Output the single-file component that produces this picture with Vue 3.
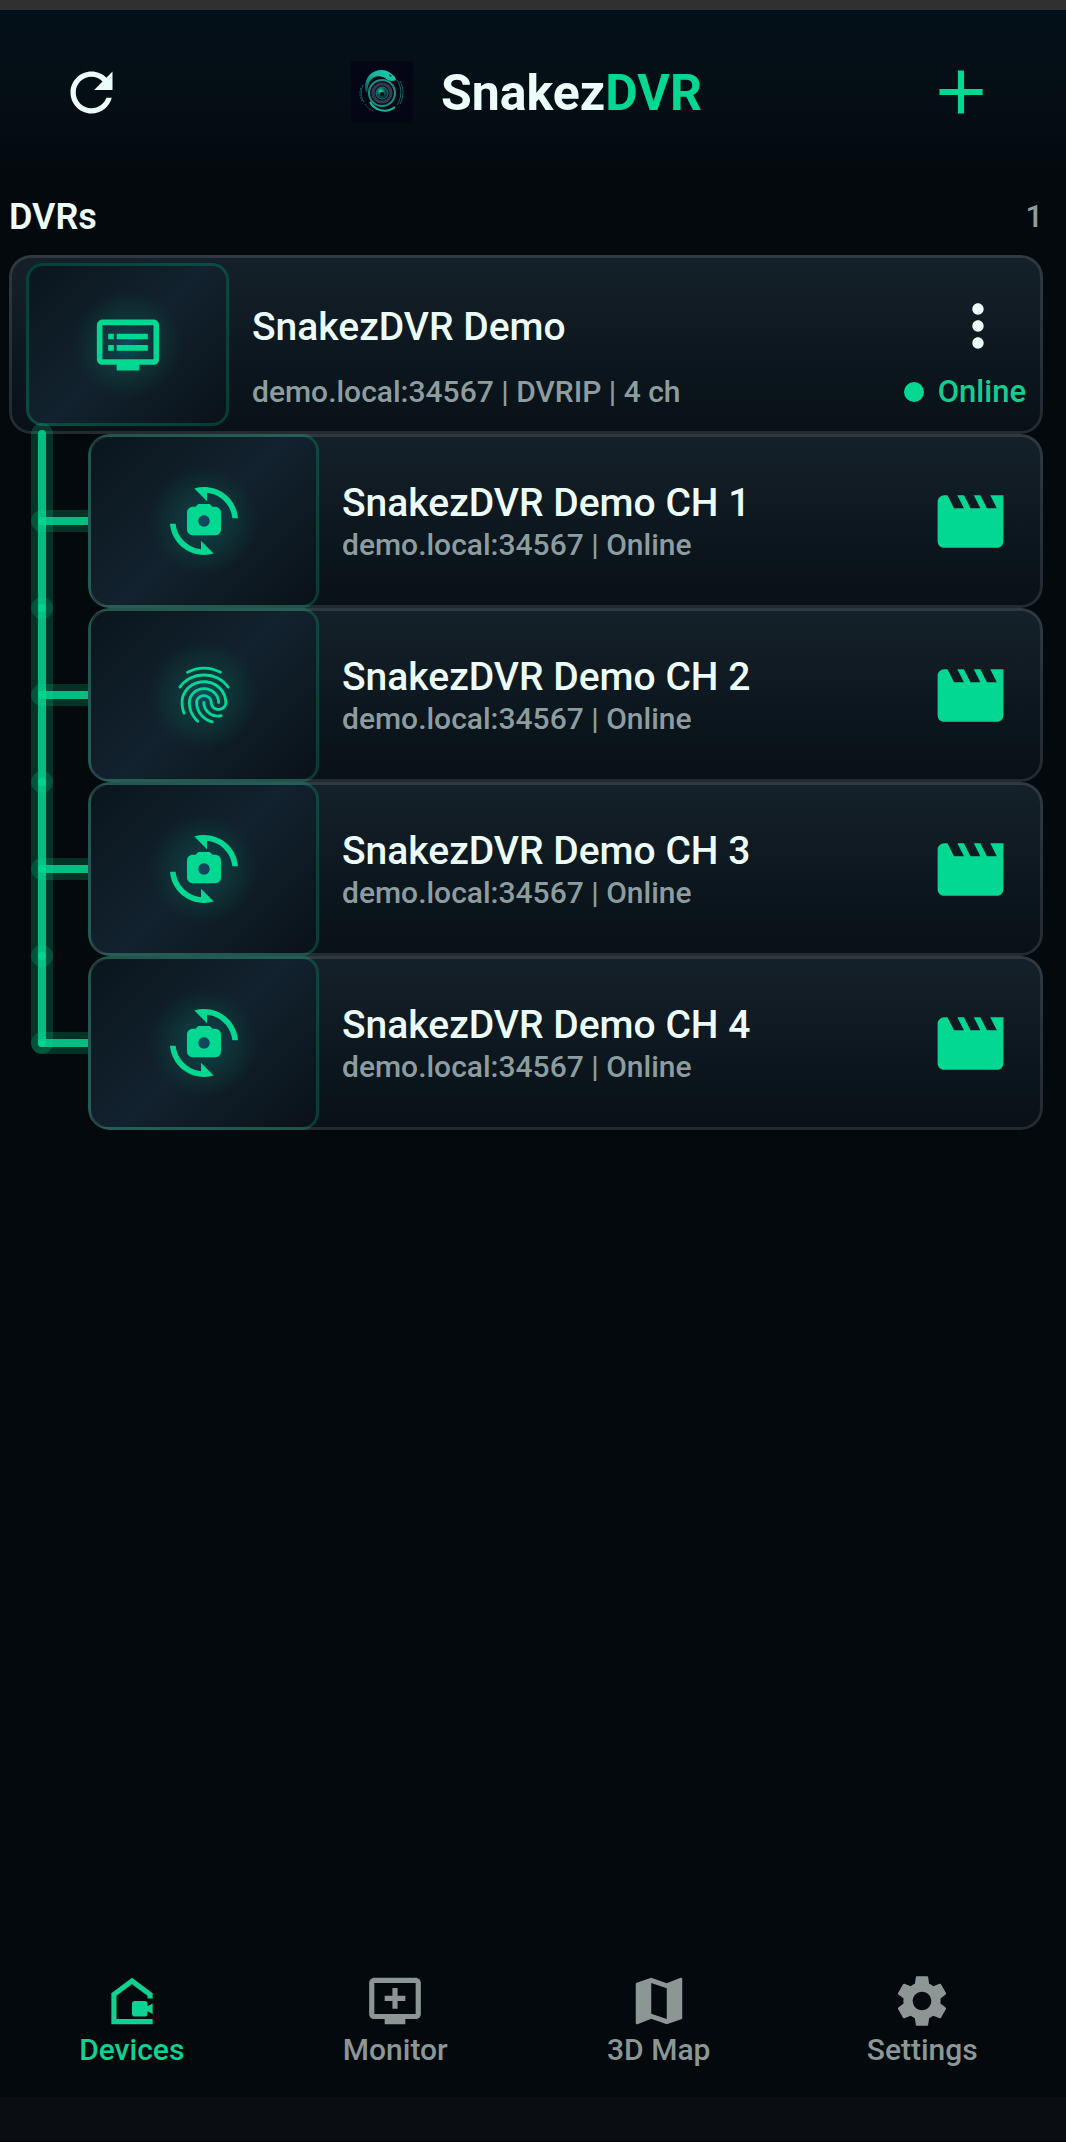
<script setup>
const dvrs = [{ name: 'SnakezDVR Demo', host: 'demo.local:34567', protocol: 'DVRIP' }]

const icons = {
  refresh:
    'M17.65 6.35C16.2 4.9 14.21 4 12 4c-4.42 0-7.99 3.58-7.99 8s3.57 8 7.99 8c3.73 0 6.84-2.55 7.73-6h-2.08c-.82 2.33-3.04 4-5.65 4-3.31 0-6-2.69-6-6s2.69-6 6-6c1.66 0 3.14.69 4.22 1.78L13 11h7V4l-2.35 2.35z',
  add: 'M19 13h-6v6h-2v-6H5v-2h6V5h2v6h6z',
  more:
    'M12 8c1.1 0 2-.9 2-2s-.9-2-2-2-2 .9-2 2 .9 2 2 2zm0 2c-1.1 0-2 .9-2 2s.9 2 2 2 2-.9 2-2-.9-2-2-2zm0 6c-1.1 0-2 .9-2 2s.9 2 2 2 2-.9 2-2-.9-2-2-2z',
  dvr:
    'M21 3H3c-1.1 0-2 .9-2 2v12c0 1.1.9 2 2 2h5v2h8v-2h5c1.1 0 1.99-.9 1.99-2L23 5c0-1.1-.9-2-2-2zm0 14H3V5h18v12zm-2-9H8v2h11V8zm0 4H8v2h11v-2zM7 8H5v2h2V8zm0 4H5v2h2v-2z',
  camera:
    'M16 7h-1l-1-1h-4L9 7H8c-1.1 0-2 .9-2 2v6c0 1.1.9 2 2 2h8c1.1 0 2-.9 2-2V9c0-1.1-.9-2-2-2zm-4 7c-1.1 0-2-.9-2-2s.9-2 2-2 2 .9 2 2-.9 2-2 2zM8.57.51l4.48 4.48V2.04c4.72.47 8.48 4.23 8.95 8.95h2C23.34 3.02 15.49-1.59 8.57.51zM10.95 21.96C6.23 21.49 2.47 17.73 2 13.01H0c.66 7.97 8.51 12.58 15.43 10.48l-4.48-4.48v2.95z',
  fingerprint:
    'M17.81 4.47c-.08 0-.16-.02-.23-.06C15.66 3.42 14 3 12.01 3c-1.98 0-3.86.47-5.57 1.41-.24.13-.54.04-.68-.2-.13-.24-.04-.55.2-.68C7.82 2.52 9.86 2 12.01 2c2.13 0 3.99.47 6.03 1.52.25.13.34.43.21.67-.09.18-.26.28-.44.28zM3.5 9.72c-.1 0-.2-.03-.29-.09-.23-.16-.28-.47-.12-.7.99-1.4 2.25-2.5 3.75-3.27C9.98 4.04 14 4.03 17.15 5.65c1.5.77 2.76 1.86 3.75 3.25.16.22.11.54-.12.7-.23.16-.54.11-.7-.12-.9-1.26-2.04-2.25-3.39-2.94-2.87-1.47-6.54-1.47-9.4.01-1.36.7-2.5 1.7-3.4 2.96-.08.14-.23.21-.39.21zm6.25 12.07c-.13 0-.26-.05-.35-.15-.87-.87-1.34-1.43-2.01-2.64-.69-1.23-1.05-2.73-1.05-4.34 0-2.97 2.54-5.39 5.66-5.39s5.66 2.42 5.66 5.39c0 .28-.22.5-.5.5s-.5-.22-.5-.5c0-2.42-2.09-4.39-4.66-4.39-2.57 0-4.66 1.97-4.66 4.39 0 1.44.32 2.77.93 3.85.64 1.15 1.08 1.64 1.85 2.42.19.2.19.51 0 .71-.11.1-.24.15-.37.15zm7.17-1.85c-1.19 0-2.24-.3-3.1-.89-1.49-1.01-2.38-2.65-2.38-4.39 0-.28.22-.5.5-.5s.5.22.5.5c0 1.41.72 2.74 1.94 3.56.71.48 1.54.71 2.54.71.24 0 .64-.03 1.04-.1.27-.05.53.13.58.41.05.27-.13.53-.41.58-.57.11-1.07.12-1.21.12zM14.91 22c-.04 0-.09-.01-.13-.02-1.59-.44-2.63-1.03-3.72-2.1-1.4-1.39-2.17-3.24-2.17-5.22 0-1.62 1.38-2.94 3.08-2.94 1.7 0 3.08 1.32 3.08 2.94 0 1.07.93 1.94 2.08 1.94s2.08-.87 2.08-1.94c0-3.77-3.25-6.83-7.25-6.83-2.84 0-5.44 1.58-6.61 4.03-.39.81-.59 1.76-.59 2.8 0 .78.07 2.01.67 3.61.1.26-.03.55-.29.64-.26.1-.55-.04-.64-.29-.49-1.31-.73-2.61-.73-3.96 0-1.2.23-2.29.68-3.24 1.33-2.79 4.28-4.6 7.51-4.6 4.55 0 8.25 3.51 8.25 7.83 0 1.62-1.38 2.94-3.08 2.94s-3.08-1.32-3.08-2.94c0-1.07-.93-1.94-2.08-1.94s-2.08.87-2.08 1.94c0 1.71.66 3.31 1.87 4.51.95.94 1.86 1.46 3.27 1.85.27.07.42.35.35.61-.05.23-.26.38-.47.38z',
  movie:
    'M18 4l2 4h-3l-2-4h-2l2 4h-3l-2-4H8l2 4H7L5 4H4c-1.1 0-1.99.9-1.99 2L2 18c0 1.1.9 2 2 2h16c1.1 0 2-.9 2-2V4h-4z',
  home:
    'M18 11v-1l-6-4.5L6 10v9h14v2H4V9l8-6 8 6v2zM18 13c0-.55-.45-1-1-1h-4c-.55 0-1 .45-1 1v4c0 .55.45 1 1 1h4c.55 0 1-.45 1-1v-1l2 1v-4l-2 1z',
  monitor:
    'M20 3H4c-1.1 0-2 .9-2 2v12c0 1.1.9 2 2 2h4v2h8v-2h4c1.1 0 2-.9 2-2V5c0-1.1-.9-2-2-2zm0 14H4V5h16v12zM16 10v2h-3v3h-2v-3H8v-2h3V7h2v3h3z',
  map:
    'M20.5 3l-.16.03L15 5.1 9 3 3.36 4.9c-.21.07-.36.25-.36.48V20.5c0 .28.22.5.5.5l.16-.03L9 18.9l6 2.1 5.64-1.9c.21-.07.36-.25.36-.48V3.5c0-.28-.22-.5-.5-.5zM15 19l-6-2.11V5l6 2.11V19z',
  settings:
    'M19.14 12.94c.04-.3.06-.61.06-.94 0-.32-.02-.64-.07-.94l2.03-1.58c.18-.14.23-.41.12-.61l-1.92-3.32c-.12-.22-.37-.29-.59-.22l-2.39.96c-.5-.38-1.03-.7-1.62-.94l-.36-2.54c-.04-.24-.24-.41-.48-.41h-3.84c-.24 0-.43.17-.47.41l-.36 2.54c-.59.24-1.13.57-1.62.94l-2.39-.96c-.22-.08-.47 0-.59.22L2.74 8.87c-.12.21-.08.47.12.61l2.03 1.58c-.05.3-.09.63-.09.94s.02.64.07.94l-2.03 1.58c-.18.14-.23.41-.12.61l1.92 3.32c.12.22.37.29.59.22l2.39-.96c.5.38 1.03.7 1.62.94l.36 2.54c.05.24.24.41.48.41h3.84c.24 0 .44-.17.47-.41l.36-2.54c.59-.24 1.13-.56 1.62-.94l2.39.96c.22.08.47 0 .59-.22l1.92-3.32c.12-.22.07-.47-.12-.61l-2.01-1.58zM12 15.6c-1.98 0-3.6-1.62-3.6-3.6s1.62-3.6 3.6-3.6 3.6 1.62 3.6 3.6-1.62 3.6-3.6 3.6z',
}

const channels = [
  { number: 1, icon: icons.camera },
  { number: 2, icon: icons.fingerprint },
  { number: 3, icon: icons.camera },
  { number: 4, icon: icons.camera },
]

const tabs = [
  { label: 'Devices', icon: icons.home, active: true },
  { label: 'Monitor', icon: icons.monitor },
  { label: '3D Map', icon: icons.map },
  { label: 'Settings', icon: icons.settings },
]
</script>

<template>
  <div class="app">
    <div class="status-strip"></div>

    <header class="header">
      <button class="icon-button" type="button" aria-label="Refresh">
        <svg class="icon-refresh" viewBox="0 0 24 24"><path :d="icons.refresh" /></svg>
      </button>
      <div class="brand">
        <svg class="logo" viewBox="0 0 62 62" aria-hidden="true">
          <defs>
            <linearGradient id="snake" x1="0" y1="1" x2="1" y2="0">
              <stop offset="0" stop-color="#0a4a4a" />
              <stop offset="0.5" stop-color="#12b49a" />
              <stop offset="1" stop-color="#1fd0ae" />
            </linearGradient>
            <radialGradient id="lens" cx="0.4" cy="0.35" r="0.7">
              <stop offset="0" stop-color="#2fd3ac" />
              <stop offset="0.45" stop-color="#0b5c56" />
              <stop offset="1" stop-color="#04181f" />
            </radialGradient>
          </defs>
          <rect width="62" height="62" fill="#040515" />
          <g fill="none" stroke="#0d6560" stroke-width="1">
            <path d="M12 24c-3 6-2 13 1 17M46 19c5 7 5 18 0 25M49 20c4 7 4 16 0 23" />
            <path d="M10 27c-2 5-1 9 1 13M14 43c2 3 5 6 9 7" stroke-dasharray="2 1" />
          </g>
          <circle cx="31" cy="32" r="13" fill="#0a0d1c" stroke="#17917f" stroke-width="2" />
          <circle cx="31" cy="32" r="9" fill="none" stroke="#343a50" stroke-width="3" />
          <circle cx="31" cy="32" r="6" fill="url(#lens)" stroke="#157d70" />
          <circle cx="31" cy="33" r="2" fill="#020a10" />
          <path d="M19 41c4 8 16 12 25 5" fill="none" stroke="#18b79b" stroke-width="2" />
          <path
            d="M14 26c0-10 7-17 17-17 5 0 9 3 13 7l1 3c-4 2-8 1-11-2-8-4-15-1-17 9l-1 6c-2-2-2-4-2-6z"
            fill="url(#snake)"
          />
          <path d="M38 13l3 2-2 1z" fill="#04302f" />
        </svg>
        <h1 class="brand-name">Snakez<span class="accent">DVR</span></h1>
      </div>
      <button class="icon-button accent" type="button" aria-label="Add device">
        <svg class="icon-add" viewBox="0 0 24 24"><path :d="icons.add" /></svg>
      </button>
    </header>

    <main class="content">
      <div class="section-head">
        <h2 class="section-title">DVRs</h2>
        <span class="section-count">{{ dvrs.length }}</span>
      </div>

      <section v-for="dvr in dvrs" :key="dvr.name">
        <article class="card device">
          <div class="thumb">
            <svg class="thumb-icon" viewBox="0 0 24 24"><path :d="icons.dvr" /></svg>
          </div>
          <div class="device-body">
            <div class="device-row device-top">
              <h3 class="title">{{ dvr.name }}</h3>
              <button class="icon-button" type="button" aria-label="More options">
                <svg class="thumb-icon" viewBox="0 0 24 24"><path :d="icons.more" /></svg>
              </button>
            </div>
            <div class="device-row">
              <p class="meta">{{ dvr.host }} | {{ dvr.protocol }} | {{ channels.length }} ch</p>
              <span class="status"><i class="status-dot"></i>Online</span>
            </div>
          </div>
        </article>

        <ul class="channels">
          <li v-for="(channel, index) in channels" :key="channel.number" class="channel-row">
            <svg class="rail" viewBox="0 0 79 174" aria-hidden="true">
              <line class="rail-glow" x1="33" y1="0" x2="33" :y2="index < channels.length - 1 ? 174 : 87" />
              <line class="rail-glow" x1="33" y1="87" x2="90" y2="87" />
              <line class="rail-core" x1="33" y1="0" x2="33" :y2="index < channels.length - 1 ? 174 : 87" />
              <line class="rail-core" x1="33" y1="87" x2="90" y2="87" />
            </svg>
            <article class="card channel">
              <div class="thumb thumb-wide">
                <svg class="thumb-icon" viewBox="0 0 24 24"><path :d="channel.icon" /></svg>
              </div>
              <div class="channel-body">
                <h3 class="title">{{ dvr.name }} CH {{ channel.number }}</h3>
                <p class="meta">{{ dvr.host }} | Online</p>
              </div>
              <button class="icon-button accent" type="button" :aria-label="`Recordings of channel ${channel.number}`">
                <svg class="icon-movie" viewBox="0 0 24 24"><path :d="icons.movie" /></svg>
              </button>
            </article>
          </li>
        </ul>
      </section>
    </main>

    <nav class="tabs">
      <a v-for="tab in tabs" :key="tab.label" href="#" class="tab" :class="{ active: tab.active }">
        <svg class="tab-icon" viewBox="0 0 24 24"><path :d="tab.icon" /></svg>
        <span>{{ tab.label }}</span>
      </a>
    </nav>
    <div class="system-bar"></div>
  </div>
</template>

<style>
body {
  margin: 0;
  background: #04090d;
}
</style>

<style scoped>
.app {
  box-sizing: border-box;
  display: flex;
  flex-direction: column;
  min-height: 100vh;
  background: #04090d;
  color: #ecfcf8;
  font-family: Roboto, 'Liberation Sans', sans-serif;
  font-weight: 500;
}
h1,
h2,
h3,
p,
ul {
  margin: 0;
  padding: 0;
  font-weight: inherit;
}
svg {
  display: block;
  fill: currentColor;
}
.accent {
  color: #02d892;
}
.status-strip {
  height: 10px;
  background: #303030;
}
.header {
  display: flex;
  align-items: center;
  justify-content: space-between;
  height: 164px;
  box-sizing: border-box;
  padding: 0 68px 0 60px;
  background: linear-gradient(#041018, #050e15 60%, #04090d);
}
.icon-button {
  padding: 0;
  border: 0;
  background: none;
  color: #ecfcf8;
  cursor: pointer;
}
.icon-button.accent {
  color: #02d892;
}
.icon-refresh {
  width: 63px;
  height: 63px;
}
.icon-add {
  width: 74px;
  height: 74px;
}
.brand {
  display: flex;
  align-items: center;
  gap: 28px;
  padding-left: 6px;
}
.logo {
  width: 62px;
  height: 62px;
}
.brand-name {
  padding-top: 2px;
  font-size: 50px;
  line-height: 60px;
  font-weight: 700;
}
.content {
  flex: 1;
  padding: 21px 23px 0 9px;
}
.section-head {
  display: flex;
  align-items: center;
  justify-content: space-between;
  height: 44px;
  margin-bottom: 16px;
}
.section-title {
  font-size: 36px;
  line-height: 44px;
  font-weight: 600;
}
.section-count {
  font-size: 31px;
  line-height: 44px;
  color: #8d9d9f;
}
.card {
  position: relative;
  display: flex;
  overflow: hidden;
  box-sizing: border-box;
  border-radius: 22px;
  background: linear-gradient(#15212a, #0c161e 60%, #081117);
}
.card::after {
  content: '';
  position: absolute;
  inset: 0;
  border: 3px solid rgba(255, 255, 255, 0.11);
  border-radius: 22px;
  pointer-events: none;
}
.thumb {
  display: flex;
  align-items: center;
  justify-content: center;
  flex: none;
  box-sizing: border-box;
  width: 203px;
  border: 3px solid rgba(2, 216, 146, 0.22);
  border-radius: 17px;
  color: #02d892;
  background:
    radial-gradient(circle 54px, rgba(16, 90, 125, 0.7), rgba(10, 90, 90, 0.42) 30%, rgba(8, 120, 90, 0.16) 65%, rgba(8, 120, 90, 0)),
    linear-gradient(135deg, #0a151d, #12222e 50%, #091118) border-box;
}
.thumb-wide {
  width: 231px;
}
.thumb-icon {
  width: 68px;
  height: 68px;
}
.device {
  height: 179px;
  padding: 8px 17px;
}
.device-body {
  flex: 1;
  padding-left: 23px;
}
.device-row {
  display: flex;
  align-items: center;
  justify-content: space-between;
}
.device-top {
  height: 68px;
  padding: 29px 14px 12px 0;
}
.title {
  padding-top: 2px;
  font-size: 39px;
  line-height: 44px;
}
.meta {
  font-size: 30px;
  line-height: 40px;
  color: #8d9d9f;
}
.status {
  display: flex;
  align-items: center;
  gap: 14px;
  font-size: 31px;
  line-height: 40px;
  color: #14cd91;
}
.status-dot {
  width: 20px;
  height: 20px;
  border-radius: 50%;
  background: #02d892;
}
.channels {
  list-style: none;
}
.channel-row {
  display: flex;
}
.rail {
  position: relative;
  flex: none;
  width: 79px;
  height: 174px;
  overflow: visible;
}
.rail-glow,
.rail-core {
  stroke: #02d892;
  stroke-linecap: round;
}
.rail-glow {
  stroke-width: 22px;
  stroke-opacity: 0.2;
}
.rail-core {
  stroke-width: 8px;
  stroke-opacity: 0.84;
}
.channel {
  flex: 1;
  height: 174px;
  padding-right: 33px;
}
.channel-body {
  flex: 1;
  padding: 45px 0 0 23px;
}
.icon-movie {
  width: 79px;
  height: 79px;
}
.tabs {
  display: flex;
  padding: 14px 12px 29px 0;
}
.tab {
  display: flex;
  flex: 1;
  flex-direction: column;
  align-items: center;
  color: #8c9795;
  font-size: 30px;
  line-height: 36px;
  text-decoration: none;
}
.tab.active {
  color: #0dd292;
}
.tab-icon {
  width: 62px;
  height: 62px;
}
.system-bar {
  height: 44px;
  border-bottom: 1px solid #000;
  background: #0a0e13;
}
</style>
